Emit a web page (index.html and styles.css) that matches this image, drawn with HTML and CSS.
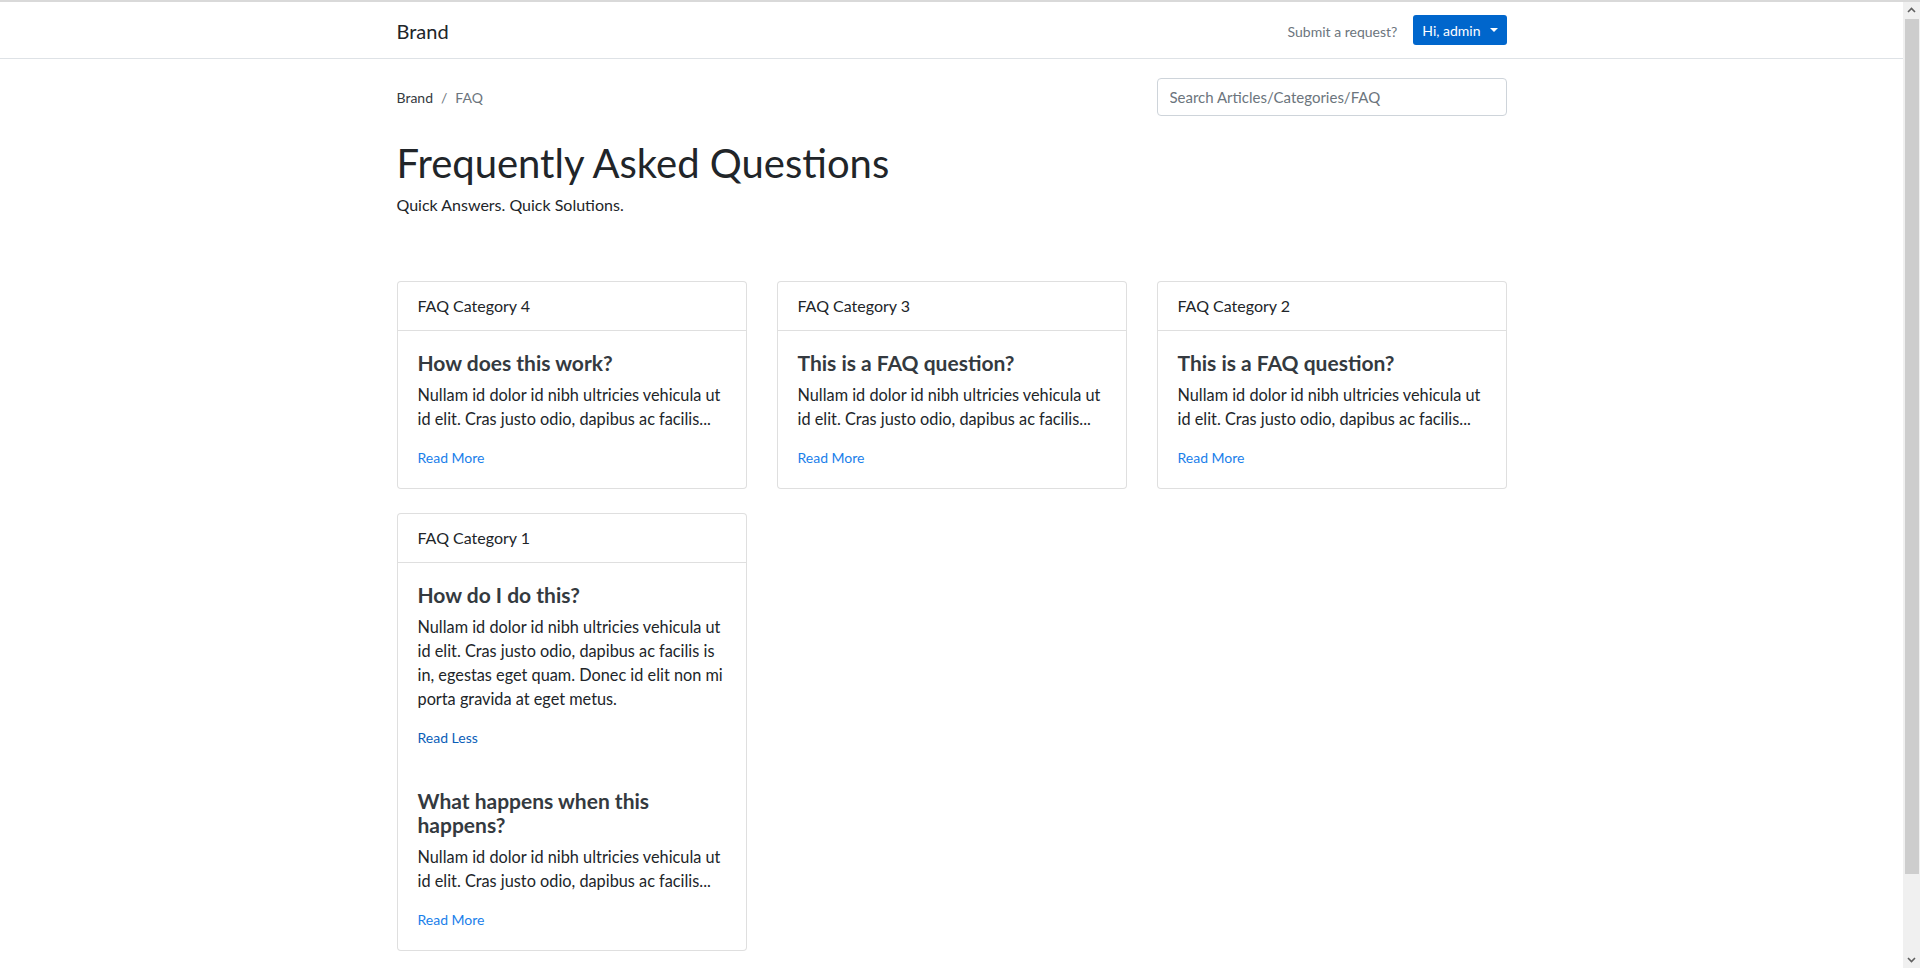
FILE: index.html
```html
<!DOCTYPE html>
<html lang="en">
<head>
    <meta charset="UTF-8">
    <meta name="viewport" content="width=device-width, initial-scale=1.0">
    <title>FAQ</title>
    <link rel="stylesheet" href="styles.css">
</head>
<body>
    <nav class="navbar">
        <div class="container navbar-inner">
            <a class="brand" href="#">Brand</a>
            <div class="nav-right">
                <a class="nav-link" href="#">Submit a request?</a>
                <button class="btn-user">Hi, admin <span class="caret"></span></button>
            </div>
        </div>
    </nav>

    <main class="container page">
        <div class="top-row">
            <ol class="breadcrumb">
                <li><a href="#">Brand</a></li>
                <li class="sep">/</li>
                <li class="active">FAQ</li>
            </ol>
            <input class="search" type="text" placeholder="Search Articles/Categories/FAQ">
        </div>

        <h1 class="title">Frequently Asked Questions</h1>
        <p class="lead">Quick Answers. Quick Solutions.</p>

        <div class="cards">
            <div class="card">
                <div class="card-header">FAQ Category 4</div>
                <div class="card-body">
                    <div class="faq">
                        <h5>How does this work?</h5>
                        <p>Nullam id dolor id nibh ultricies vehicula ut id elit. Cras justo odio, dapibus ac facilis...</p>
                        <a class="more" href="#">Read More</a>
                    </div>
                </div>
            </div>
            <div class="card">
                <div class="card-header">FAQ Category 3</div>
                <div class="card-body">
                    <div class="faq">
                        <h5>This is a FAQ question?</h5>
                        <p>Nullam id dolor id nibh ultricies vehicula ut id elit. Cras justo odio, dapibus ac facilis...</p>
                        <a class="more" href="#">Read More</a>
                    </div>
                </div>
            </div>
            <div class="card">
                <div class="card-header">FAQ Category 2</div>
                <div class="card-body">
                    <div class="faq">
                        <h5>This is a FAQ question?</h5>
                        <p>Nullam id dolor id nibh ultricies vehicula ut id elit. Cras justo odio, dapibus ac facilis...</p>
                        <a class="more" href="#">Read More</a>
                    </div>
                </div>
            </div>
            <div class="card">
                <div class="card-header">FAQ Category 1</div>
                <div class="card-body">
                    <div class="faq">
                        <h5>How do I do this?</h5>
                        <p>Nullam id dolor id nibh ultricies vehicula ut id elit. Cras justo odio, dapibus ac facilis is in, egestas eget quam. Donec id elit non mi porta gravida at eget metus.</p>
                        <a class="more less" href="#">Read Less</a>
                    </div>
                    <div class="faq">
                        <h5>What happens when this happens?</h5>
                        <p>Nullam id dolor id nibh ultricies vehicula ut id elit. Cras justo odio, dapibus ac facilis...</p>
                        <a class="more" href="#">Read More</a>
                    </div>
                </div>
            </div>
        </div>
    </main>

    <!-- window scrollbar -->
    <div class="scrollbar">
        <svg class="arrow" width="17" height="17" viewBox="0 0 17 17"><path d="M5 10 L8.5 6.5 L12 10" fill="none" stroke="#606060" stroke-width="1.6"/></svg>
        <div class="thumb"></div>
        <svg class="arrow arrow-down" width="17" height="17" viewBox="0 0 17 17"><path d="M5 7 L8.5 10.5 L12 7" fill="none" stroke="#606060" stroke-width="1.6"/></svg>
    </div>
</body>
</html>
```

FILE: styles.css
```css
* {
    box-sizing: border-box;
}

html, body {
    margin: 0;
}

body {
    font-family: Lato, "Liberation Sans", sans-serif;
    font-size: 16px;
    line-height: 1.5;
    color: #212529;
    background: #fff;
    border-top: 2px solid #d9d9d9;
    padding-right: 17px;
}

a {
    text-decoration: none;
}

.container {
    max-width: 1140px;
    margin: 0 auto;
    padding: 0 15px;
}

/* navbar */
.navbar {
    border-bottom: 1px solid #dee2e6;
}

.navbar-inner {
    height: 56px;
    display: flex;
    align-items: center;
    justify-content: space-between;
}

.brand {
    font-size: 20px;
    color: #212529;
    padding-top: 2px;
}

.nav-right {
    display: flex;
    align-items: center;
    gap: 16px;
}

.nav-link {
    font-size: 14px;
    color: #6c757d;
    padding-top: 2px;
}

.btn-user {
    font-family: inherit;
    font-size: 14px;
    color: #fff;
    background: #0066cc;
    border: none;
    border-radius: 3px;
    height: 30px;
    padding: 0 9px;
    display: flex;
    align-items: center;
    gap: 9px;
    cursor: pointer;
}

.caret {
    width: 0;
    height: 0;
    border-left: 4px solid transparent;
    border-right: 4px solid transparent;
    border-top: 4px solid #fff;
}

/* page */
.page {
    padding-top: 19px;
    padding-bottom: 85px;
}

.top-row {
    display: flex;
    align-items: center;
    justify-content: space-between;
}

.breadcrumb {
    list-style: none;
    margin: 0;
    padding: 0;
    display: flex;
    gap: 8px;
    font-size: 14px;
}

.breadcrumb a {
    color: #343a40;
}

.breadcrumb .sep,
.breadcrumb .active {
    color: #6c757d;
}

.search {
    width: 350px;
    height: 38px;
    padding: 6px 12px;
    font-family: inherit;
    font-size: 15px;
    color: #495057;
    border: 1px solid #ced4da;
    border-radius: 4px;
    outline: none;
}

.search::placeholder {
    color: #6c757d;
}

.title {
    font-size: 40px;
    font-weight: 400;
    line-height: 1.2;
    margin: 23px 0 6px;
}

.lead {
    margin: 0;
}

/* cards */
.cards {
    margin-top: 64px;
    display: grid;
    grid-template-columns: repeat(3, 1fr);
    gap: 24px 30px;
    align-items: start;
}

.card {
    border: 1px solid rgba(0, 0, 0, .125);
    border-radius: 4px;
    background: #fff;
}

.card-header {
    padding: 12px 20px;
    border-bottom: 1px solid rgba(0, 0, 0, .125);
}

.card-body {
    padding: 20px;
}

.faq + .faq {
    margin-top: 41px;
}

.faq h5 {
    font-size: 21px;
    font-weight: 700;
    line-height: 24px;
    color: #343a40;
    margin: 0 0 8px;
}

.faq p {
    font-size: 16.3px;
    line-height: 24px;
    margin: 0 0 16px;
}

.more {
    display: block;
    font-size: 14px;
    line-height: 21px;
    color: #1a80ea;
}

.more.less {
    color: #0a5eb8;
}

/* scrollbar of the window */
.scrollbar {
    position: fixed;
    top: 2px;
    right: 0;
    bottom: 0;
    width: 17px;
    background: #f0f0f0;
    display: flex;
    flex-direction: column;
}

.arrow {
    flex: none;
}

.thumb {
    height: 855px;
    margin: 0 1px 0 2px;
    background: #cdcdcd;
}

.arrow-down {
    margin-top: auto;
}
```
